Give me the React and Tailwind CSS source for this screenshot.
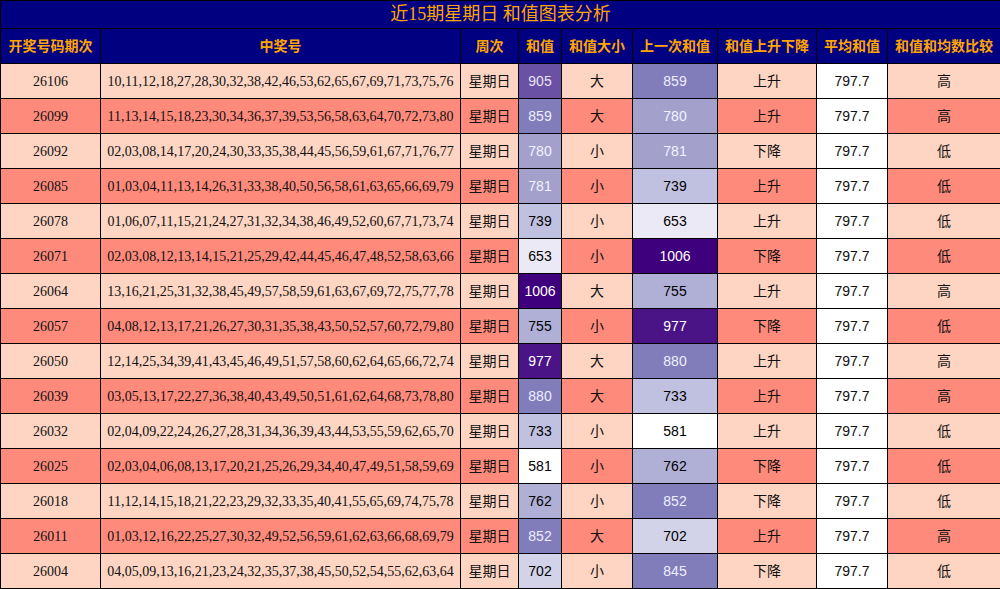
const rows = [
  ['26106','10,11,12,18,27,28,30,32,38,42,46,53,62,65,67,69,71,73,75,76',905,'大',859,'上升','高'],
  ['26099','11,13,14,15,18,23,30,34,36,37,39,53,56,58,63,64,70,72,73,80',859,'大',780,'上升','高'],
  ['26092','02,03,08,14,17,20,24,30,33,35,38,44,45,56,59,61,67,71,76,77',780,'小',781,'下降','低'],
  ['26085','01,03,04,11,13,14,26,31,33,38,40,50,56,58,61,63,65,66,69,79',781,'小',739,'上升','低'],
  ['26078','01,06,07,11,15,21,24,27,31,32,34,38,46,49,52,60,67,71,73,74',739,'小',653,'上升','低'],
  ['26071','02,03,08,12,13,14,15,21,25,29,42,44,45,46,47,48,52,58,63,66',653,'小',1006,'下降','低'],
  ['26064','13,16,21,25,31,32,38,45,49,57,58,59,61,63,67,69,72,75,77,78',1006,'大',755,'上升','高'],
  ['26057','04,08,12,13,17,21,26,27,30,31,35,38,43,50,52,57,60,72,79,80',755,'小',977,'下降','低'],
  ['26050','12,14,25,34,39,41,43,45,46,49,51,57,58,60,62,64,65,66,72,74',977,'大',880,'上升','高'],
  ['26039','03,05,13,17,22,27,36,38,40,43,49,50,51,61,62,64,68,73,78,80',880,'大',733,'上升','高'],
  ['26032','02,04,09,22,24,26,27,28,31,34,36,39,43,44,53,55,59,62,65,70',733,'小',581,'上升','低'],
  ['26025','02,03,04,06,08,13,17,20,21,25,26,29,34,40,47,49,51,58,59,69',581,'小',762,'下降','低'],
  ['26018','11,12,14,15,18,21,22,23,29,32,33,35,40,41,55,65,69,74,75,78',762,'小',852,'下降','低'],
  ['26011','01,03,12,16,22,25,27,30,32,49,52,56,59,61,62,63,66,68,69,79',852,'大',702,'上升','高'],
  ['26004','04,05,09,13,16,21,23,24,32,35,37,38,45,50,52,54,55,62,63,64',702,'小',845,'下降','低'],
]

const shade = (v) => {
  if (v >= 1000) return 'bg-[#3f007d] text-white'
  if (v >= 950) return 'bg-[#4a1486] text-white'
  if (v >= 900) return 'bg-[#6a51a3] text-[#e8e4f4]'
  if (v >= 840) return 'bg-[#807dba] text-[#eeeeff]'
  if (v >= 775) return 'bg-[#a3a1cc] text-[#f2f2ff]'
  if (v >= 750) return 'bg-[#b0b0d6] text-black'
  if (v >= 720) return 'bg-[#c0c0e0] text-black'
  if (v >= 690) return 'bg-[#d2d2e8] text-black'
  if (v >= 640) return 'bg-[#ebe9f5] text-black'
  return 'bg-white text-black'
}

const heads = ['开奖号码期次','中奖号','周次','和值','和值大小','上一次和值','和值上升下降','平均和值','和值和均数比较']
const widths = ['w-[100px]','w-[360px]','w-[58px]','w-[43px]','w-[71px]','w-[85px]','w-[99px]','w-[71px]','w-[113px]']

export default function App() {
  return (
    <div className="w-[1000px] h-[589px] overflow-hidden bg-white font-[Liberation_Sans,Noto_Sans_CJK_SC,sans-serif]">
      <table className="w-[1000px] border-collapse table-fixed text-[14px]">
        <colgroup>
          {widths.map((w, i) => <col key={i} className={w} />)}
        </colgroup>
        <thead>
          <tr>
            <th colSpan={9} className="h-[28px] bg-[#000080] text-[#ffa500] text-[18px] font-normal border border-black font-[Liberation_Serif,Noto_Sans_CJK_SC,serif]">
              近15期星期日 和值图表分析
            </th>
          </tr>
          <tr>
            {heads.map((h) => (
              <th key={h} className="h-[35px] bg-[#000080] text-[#ffa500] font-bold border border-black">{h}</th>
            ))}
          </tr>
        </thead>
        <tbody>
          {rows.map((r, i) => {
            const bg = i % 2 === 0 ? 'bg-[#fdd5c2]' : 'bg-[#fe8a7b]'
            const td = 'h-[35px] border border-black text-center text-[#111]'
            return (
              <tr key={r[0]}>
                <td className={`${td} ${bg} font-[Liberation_Serif,Noto_Sans_CJK_SC,serif]`}>{r[0]}</td>
                <td className={`${td} ${bg} font-[Liberation_Serif,Noto_Sans_CJK_SC,serif] whitespace-nowrap`}>{r[1]}</td>
                <td className={`${td} ${bg}`}>星期日</td>
                <td className={`h-[35px] border border-black text-center ${shade(r[2])}`}>{r[2]}</td>
                <td className={`${td} ${bg}`}>{r[3]}</td>
                <td className={`h-[35px] border border-black text-center ${shade(r[4])}`}>{r[4]}</td>
                <td className={`${td} ${bg}`}>{r[5]}</td>
                <td className={`${td} bg-white`}>797.7</td>
                <td className={`${td} ${bg}`}>{r[6]}</td>
              </tr>
            )
          })}
        </tbody>
      </table>
    </div>
  )
}
